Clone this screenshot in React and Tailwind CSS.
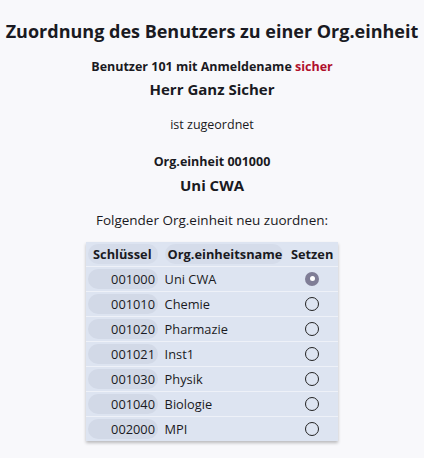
const rows = [
  { key: '001000', name: 'Uni CWA', checked: true },
  { key: '001010', name: 'Chemie' },
  { key: '001020', name: 'Pharmazie' },
  { key: '001021', name: 'Inst1' },
  { key: '001030', name: 'Physik' },
  { key: '001040', name: 'Biologie' },
  { key: '002000', name: 'MPI' },
];

const Radio = ({ checked }) =>
  checked ? (
    <span className="flex w-[14px] h-[14px] rounded-full bg-[#7f7d96] items-center justify-center">
      <span className="w-[5px] h-[5px] rounded-full bg-white" />
    </span>
  ) : (
    <span className="block w-[14px] h-[14px] rounded-full border border-[#222] bg-transparent" />
  );

export default function App() {
  return (
    <div className="min-h-[458px] bg-[#f8f8fb] text-[#1a1a22] pt-[19px] flex flex-col items-center" style={{ fontFamily: '"Open Sans", sans-serif' }}>
      <h1 className="text-[18px] font-bold leading-[24px]">Zuordnung des Benutzers zu einer Org.einheit</h1>
      <div className="mt-[15px] text-[12.5px] font-bold leading-[18px]">
        Benutzer 101 mit Anmeldename <span className="text-[#b0102c]">sicher</span>
      </div>
      <div className="mt-[2px] text-[15px] font-bold leading-[22px]">Herr Ganz Sicher</div>
      <div className="mt-[16px] text-[12.5px] leading-[18px]">ist zugeordnet</div>
      <div className="mt-[19px] text-[12.5px] font-bold leading-[18px]">Org.einheit 001000</div>
      <div className="mt-[3px] text-[15px] font-bold leading-[22px]">Uni CWA</div>
      <div className="mt-[14px] text-[13.5px] leading-[20px]">Folgender Org.einheit neu zuordnen:</div>
      <table className="mt-[12px] bg-[#dde4f1] text-[12.8px] border-collapse shadow-[0_2px_3px_rgba(0,0,0,0.25)] w-[252px]">
        <thead>
          <tr className="h-[24px]">
            <th className="px-[2px] text-left font-bold">
              <span className="block rounded-full bg-[#d5dcea] px-[5px] leading-[20px] w-[70px]">Schlüssel</span>
            </th>
            <th className="px-[2px] text-left font-bold">
              <span className="block rounded-full bg-[#d5dcea] px-[3px] leading-[20px] w-[118px]">Org.einheitsname</span>
            </th>
            <th className="pl-[2px] pr-[3px] text-left font-bold leading-[20px]">Setzen</th>
          </tr>
        </thead>
        <tbody>
          {rows.map((r) => (
            <tr key={r.key} className="h-[25px] border-t border-[#eef1f8]">
              <td className="px-[2px]">
                <span className="block rounded-full bg-[#d2d9e7] pr-[3px] text-right leading-[20px] w-[70px]">{r.key}</span>
              </td>
              <td className="px-[2px] leading-[20px]">{r.name}</td>
              <td className="pr-[2px]">
                <div className="flex justify-center items-center">
                  <Radio checked={r.checked} />
                </div>
              </td>
            </tr>
          ))}
        </tbody>
      </table>
    </div>
  );
}
